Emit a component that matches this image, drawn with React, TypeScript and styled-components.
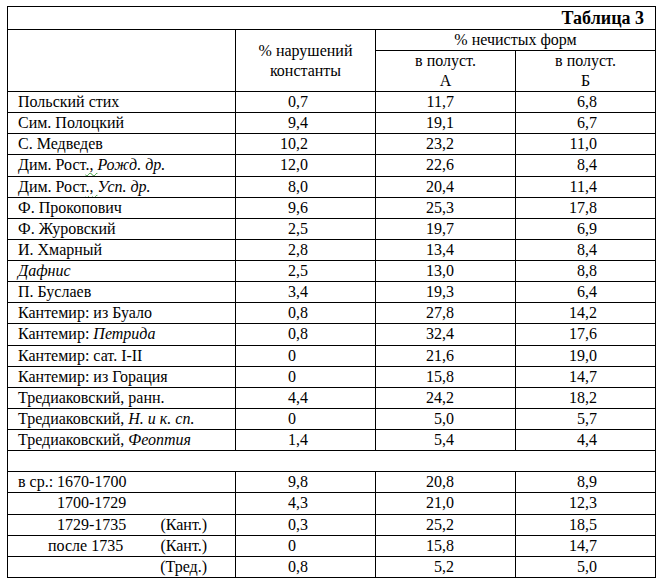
import React from "react"
import styled, { createGlobalStyle } from "styled-components"

const GlobalStyle = createGlobalStyle`
    body {
        margin: 0;
        background: #fff;
    }
`

const Page = styled.div`
    padding: 6px 0 0 7px;
    font: 16px 'Liberation Serif', serif;
    color: #000;
`

const Table = styled.table`
    border-collapse: collapse;
    table-layout: fixed;
    width: 648px;
    font: 16px 'Liberation Serif', serif;
    color: #000;
`

const Cell = styled.td`
    font: 16px/20px 'Liberation Serif', serif;
    border: 1px solid #000;
    padding: 0;
    height: 20.13px;
    text-align: left;
    vertical-align: middle;
    white-space: nowrap;
    overflow: hidden;
`

const TitleCell = styled(Cell)`
    height: 22px;
    font-weight: bold;
    font-size: 18px;
    padding-right: 11px;
    text-align: right;
`

const HeadCell = styled(Cell)`
    height: 20px;
    text-align: center;
    white-space: normal;
`

const Label = styled(Cell)`
    padding-left: 10px;
`

const SplitLabel = styled.div<{ $indent: number }>`
    display: flex;
    padding-left: ${(p) => p.$indent}px;
    padding-right: 28px;
`

const Note = styled.span`
    margin-left: auto;
`

const Squiggle = styled.span`
    text-decoration: underline wavy #3c9b3c;
    text-decoration-thickness: 1px;
    text-underline-offset: 2px;
`

const NumCell = styled(Cell)<{ $comma: number }>`
    padding-left: ${(p) => p.$comma}px;
`

const Int = styled.span`
    display: inline-block;
    width: 20px;
    margin-left: -20px;
    text-align: right;
`

type Row = {
    label: React.ReactNode
    values: [string, string, string]
}

const rows: Row[] = [
    { label: "Польский стих", values: ["0,7", "11,7", "6,8"] },
    { label: "Сим. Полоцкий", values: ["9,4", "19,1", "6,7"] },
    { label: "С. Медведев", values: ["10,2", "23,2", "11,0"] },
    {
        label: (
            <>
                Дим. Рост<Squiggle>., </Squiggle>
                <i>Рожд. др.</i>
            </>
        ),
        values: ["12,0", "22,6", "8,4"],
    },
    {
        label: (
            <>
                Дим. Рост<Squiggle>., </Squiggle>
                <i>Усп. др.</i>
            </>
        ),
        values: ["8,0", "20,4", "11,4"],
    },
    { label: "Ф. Прокопович", values: ["9,6", "25,3", "17,8"] },
    { label: "Ф. Журовский", values: ["2,5", "19,7", "6,9"] },
    { label: "И. Хмарный", values: ["2,8", "13,4", "8,4"] },
    { label: <i>Дафнис</i>, values: ["2,5", "13,0", "8,8"] },
    { label: "П. Буслаев", values: ["3,4", "19,3", "6,4"] },
    { label: "Кантемир: из Буало", values: ["0,8", "27,8", "14,2"] },
    {
        label: (
            <>
                Кантемир: <i>Петрида</i>
            </>
        ),
        values: ["0,8", "32,4", "17,6"],
    },
    { label: "Кантемир: сат. I-II", values: ["0", "21,6", "19,0"] },
    { label: "Кантемир: из Горация", values: ["0", "15,8", "14,7"] },
    { label: "Тредиаковский, ранн.", values: ["4,4", "24,2", "18,2"] },
    {
        label: (
            <>
                Тредиаковский, <i>Н. и к. сп.</i>
            </>
        ),
        values: ["0", "5,0", "5,7"],
    },
    {
        label: (
            <>
                Тредиаковский, <i>Феоптия</i>
            </>
        ),
        values: ["1,4", "5,4", "4,4"],
    },
]

type Summary = {
    indent: number
    period: string
    note?: string
    values: [string, string, string]
}

const summary: Summary[] = [
    { indent: 0, period: "в ср.: 1670-1700", values: ["9,8", "20,8", "8,9"] },
    { indent: 39, period: "1700-1729", values: ["4,3", "21,0", "12,3"] },
    { indent: 39, period: "1729-1735", note: "(Кант.)", values: ["0,3", "25,2", "18,5"] },
    { indent: 30, period: "после 1735", note: "(Кант.)", values: ["0", "15,8", "14,7"] },
    { indent: 0, period: "", note: "(Тред.)", values: ["0,8", "5,2", "5,0"] },
]

// comma position inside each number column, measured from the cell's left border
const commaAt = [60, 66, 69]

const Num: React.FC<{ value: string; col: number }> = ({ value, col }) => {
    const [int, frac] = value.split(",")
    return (
        <NumCell $comma={commaAt[col]}>
            <Int>{int}</Int>
            {frac !== undefined && `,${frac}`}
        </NumCell>
    )
}

export default function App() {
    return (
        <Page>
            <GlobalStyle />
            <Table>
                <colgroup>
                    <col style={{ width: 228 }} />
                    <col style={{ width: 140 }} />
                    <col style={{ width: 140 }} />
                    <col style={{ width: 140 }} />
                </colgroup>
                <tbody>
                    <tr>
                        <TitleCell colSpan={4}>Таблица 3</TitleCell>
                    </tr>
                    <tr>
                        <HeadCell rowSpan={2} />
                        <HeadCell rowSpan={2}>
                            % нарушений
                            <br />
                            константы
                        </HeadCell>
                        <HeadCell colSpan={2}>% нечистых форм</HeadCell>
                    </tr>
                    <tr>
                        <HeadCell>
                            в полуст.
                            <br />А
                        </HeadCell>
                        <HeadCell>
                            в полуст.
                            <br />Б
                        </HeadCell>
                    </tr>
                    {rows.map((r, i) => (
                        <tr key={i}>
                            <Label>{r.label}</Label>
                            {r.values.map((v, c) => (
                                <Num key={c} value={v} col={c} />
                            ))}
                        </tr>
                    ))}
                    <tr>
                        <Cell colSpan={4} />
                    </tr>
                    {summary.map((s, i) => (
                        <tr key={i}>
                            <Label>
                                <SplitLabel $indent={s.indent}>
                                    <span>{s.period}</span>
                                    {s.note && <Note>{s.note}</Note>}
                                </SplitLabel>
                            </Label>
                            {s.values.map((v, c) => (
                                <Num key={c} value={v} col={c} />
                            ))}
                        </tr>
                    ))}
                </tbody>
            </Table>
        </Page>
    )
}
